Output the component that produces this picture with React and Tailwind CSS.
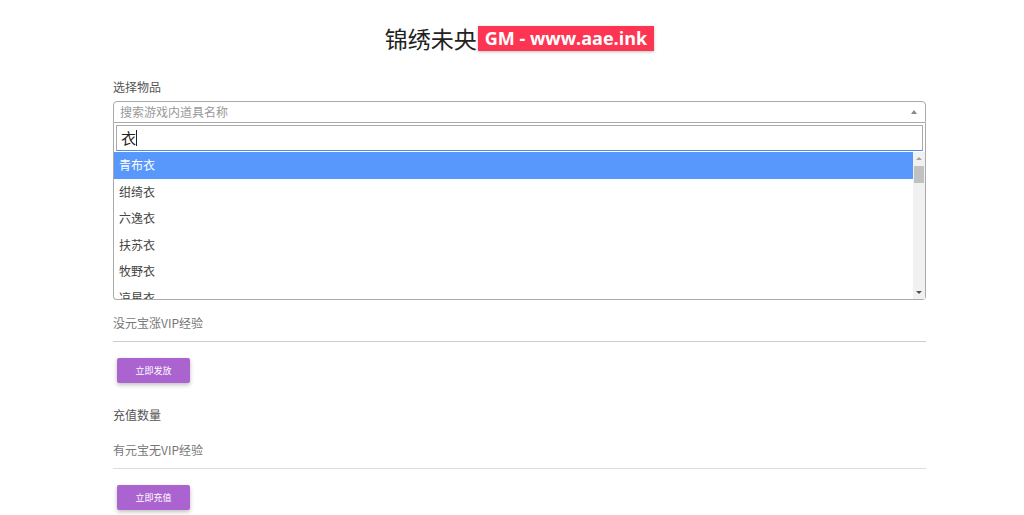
import React from 'react';

const items = ['青布衣', '绀绮衣', '六逸衣', '扶苏衣', '牧野衣', '凉星衣'];

export default function App() {
  return (
    <div className="min-h-screen bg-white font-['Noto_Sans_CJK_SC','Noto_Sans',sans-serif] text-[#333]">
      <div className="ml-[113px] w-[813px]">
        {/* Title */}
        <div className="flex justify-center pt-[23px]">
          <div className="flex items-center">
            <span className="text-[23px] leading-[30px] text-[#222]">锦绣未央</span>
            <span className="ml-px bg-[#fe3552] text-white font-bold text-[18px] leading-[25px] px-[7px] shadow-[0_1px_3px_rgba(0,0,0,0.25)] font-['Open_Sans','Noto_Sans',sans-serif]">
              GM - www.aae.ink
            </span>
          </div>
        </div>

        {/* Select item */}
        <div className="mt-[26px] text-[12px] leading-[16px] text-[#555]">选择物品</div>
        <div className="mt-[6px]">
          <div className="h-[22px] border border-[#aaa] rounded-t-[4px] flex items-center justify-between pl-[6px] pr-[8px]">
            <span className="text-[12px] text-[#999]">搜索游戏内道具名称</span>
            <span className="w-0 h-0 border-l-[3px] border-r-[3px] border-b-[4px] border-l-transparent border-r-transparent border-b-[#888]" />
          </div>
          <div className="border border-t-0 border-[#aaa] rounded-b-[4px]">
            <div className="px-[2px] pt-[2px] pb-[1px]">
              <div className="h-[26px] border border-[#aaa] border-b-[#4a8cf2] flex items-center px-[4px] text-[15px] text-[#222]">
                衣<span className="w-px h-[16px] bg-[#222]" />
              </div>
            </div>
            <div className="flex h-[147px]">
              <div className="flex-1 overflow-hidden">
                {items.map((t, i) => (
                  <div
                    key={t}
                    className={`h-[26.5px] flex items-center px-[5px] text-[12px] ${i === 0 ? 'bg-[#5897fb] text-white' : 'text-[#444]'}`}
                  >
                    {t}
                  </div>
                ))}
              </div>
              <div className="w-[12px] bg-[#f1f1f1] flex flex-col items-center">
                <span className="mt-[5px] w-0 h-0 border-l-[3px] border-r-[3px] border-b-[3px] border-l-transparent border-r-transparent border-b-[#a3a3a3]" />
                <div className="mt-[6px] w-[10px] h-[17px] bg-[#c1c1c1]" />
                <div className="flex-1" />
                <span className="mb-[5px] w-0 h-0 border-l-[3px] border-r-[3px] border-t-[3px] border-l-transparent border-r-transparent border-t-[#505050]" />
              </div>
            </div>
          </div>
        </div>

        {/* VIP without yuanbao */}
        <div className="mt-[15px] border-b border-[#ccc] h-[27px] text-[12px] text-[#777] leading-[16px]">
          没元宝涨VIP经验
        </div>
        <button className="mt-[16px] ml-[4px] w-[73px] h-[25px] rounded-[2px] bg-[#ab63d0] text-white text-[9px] shadow-[0_2px_4px_rgba(0,0,0,0.25)]">
          立即发放
        </button>

        {/* Recharge */}
        <div className="mt-[24px] text-[12px] leading-[16px] text-[#555]">充值数量</div>
        <div className="mt-[19px] border-b border-[#ddd] h-[27px] text-[12px] text-[#777] leading-[16px]">
          有元宝无VIP经验
        </div>
        <button className="mt-[16px] ml-[4px] w-[73px] h-[25px] rounded-[2px] bg-[#ab63d0] text-white text-[9px] shadow-[0_2px_4px_rgba(0,0,0,0.25)]">
          立即充值
        </button>
      </div>
    </div>
  );
}
